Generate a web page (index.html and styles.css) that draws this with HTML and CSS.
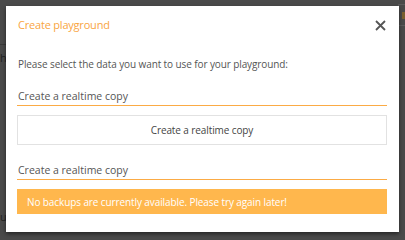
FILE: index.html
```html
<!DOCTYPE html>
<html>
<head>
<meta charset="utf-8">
<link rel="stylesheet" href="styles.css">
</head>
<body>
<div class="backdrop">
  <div class="bg-line"></div>
  <span class="bg-text bg-t1">h</span>
  <span class="bg-text bg-t2">u</span>
  <div class="bg-tab"><div class="bg-tab-mark"></div></div>
</div>
<div class="modal">
  <div class="modal-header">
    <h2 class="modal-title">Create playground</h2>
    <button class="close" aria-label="Close">
      <svg width="11" height="11" viewBox="0 0 11 11"><path d="M1 1 L10 10 M10 1 L1 10" stroke="#555" stroke-width="1.8" stroke-linecap="butt"/></svg>
    </button>
  </div>
  <p class="intro">Please select the data you want to use for your playground:</p>
  <div class="section-label">Create a realtime copy</div>
  <button class="btn">Create a realtime copy</button>
  <div class="section-label second">Create a realtime copy</div>
  <div class="alert">No backups are currently available. Please try again later!</div>
</div>
</body>
</html>
```
FILE: styles.css
```css
html, body {
  margin: 0;
  padding: 0;
  width: 405px;
  height: 240px;
  overflow: hidden;
  background: #4d4d4d;
  font-family: "Open Sans", "Liberation Sans", sans-serif;
}
.backdrop {
  position: absolute;
  inset: 0;
  background: #4a4a4a;
}
.bg-line {
  position: absolute;
  left: 0;
  top: 44px;
  width: 8px;
  height: 1px;
  background: #3a3a3a;
}
.bg-text {
  position: absolute;
  font-size: 11px;
  color: #222;
  left: 0;
}
.bg-t1 { top: 50px; }
.bg-t2 { top: 209px; }
.bg-tab {
  position: absolute;
  left: 398px;
  top: 4px;
  width: 12px;
  height: 20px;
  border: 1px solid #5c5c5c;
}
.bg-tab-mark {
  margin: 7px 0 0 3px;
  width: 3px;
  height: 7px;
  background: #7a6030;
}
.modal {
  position: absolute;
  left: 6px;
  top: 6px;
  width: 393px;
  height: 226px;
  background: #fff;
  box-shadow: 0 2px 4px rgba(0,0,0,0.5);
  box-sizing: border-box;
  padding: 0 12px 0 11px;
}
.modal-header {
  display: flex;
  align-items: center;
  justify-content: space-between;
  height: 35px;
}
.modal-title {
  margin: 0;
  font-size: 11px;
  letter-spacing: -0.2px;
  font-weight: 400;
  color: #f9a53f;
  padding-left: 1px;
  margin-top: 1px;
}
.close {
  border: 0;
  background: none;
  padding: 0;
  width: 11px;
  height: 11px;
  margin-right: 1px;
  margin-top: 3px;
  display: block;
}
.close svg { display: block; }
.intro {
  margin: 16px 0 0 1px;
  font-size: 10px;
  letter-spacing: -0.1px;
  color: #555;
  line-height: 15px;
}
.section-label {
  margin-top: 16px;
  font-size: 10.5px;
  color: #555;
  line-height: 16px;
  padding-left: 1px;
  border-bottom: 1px solid #fbab45;
  padding-bottom: 1px;
}
.btn {
  display: block;
  width: 100%;
  height: 30px;
  margin-top: 9px;
  background: #fff;
  border: 1px solid #e2e2e2;
  font-family: inherit;
  font-size: 10px;
  letter-spacing: -0.1px;
  color: #444;
}
.section-label.second {
  margin-top: 17px;
}
.alert {
  margin-top: 9px;
  height: 25px;
  background: #ffb74d;
  color: #fff;
  font-size: 10px;
  letter-spacing: -0.1px;
  display: flex;
  align-items: center;
  padding-left: 10px;
}
```
